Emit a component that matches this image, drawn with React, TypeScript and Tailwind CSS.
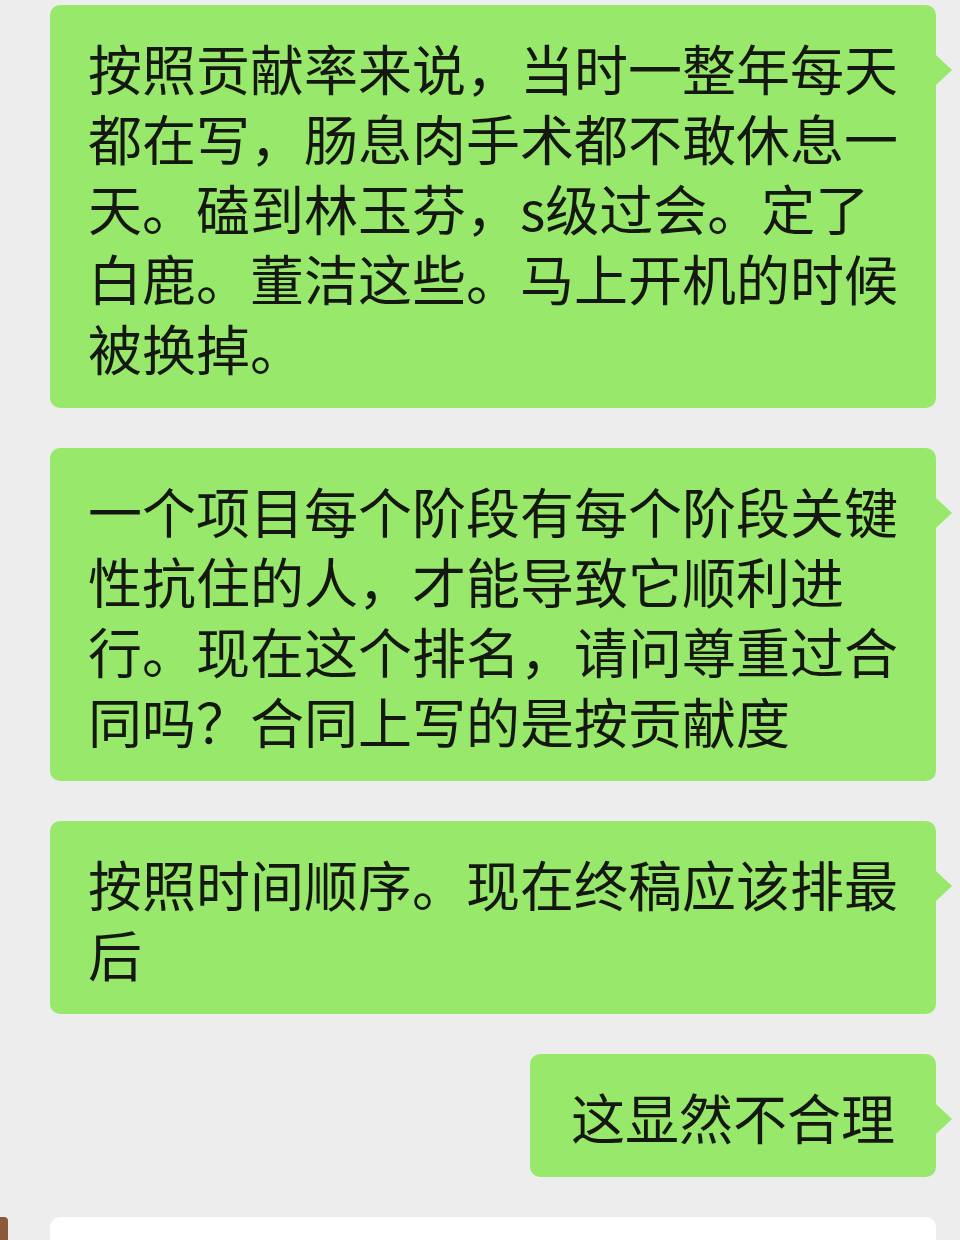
const green = "bg-[#98e96b]";

function Bubble({ lines, wide = true }: { lines: string[]; wide?: boolean }) {
  return (
    <div
      className={`relative rounded-[10px] ${green} pr-[38px] pt-[28px] pb-[25px] ${wide ? "w-[886px] pl-[38px]" : "w-[406px] pl-[41px]"}`}
    >
      {lines.map((l, i) => (
        <div key={i} className="whitespace-nowrap text-[54px] leading-[70px] text-[#141811]">
          {l}
        </div>
      ))}
      {/* tail */}
      <div className="absolute right-[-16px] top-[50px] w-0 h-0 border-y-[15px] border-y-transparent border-l-[16px] border-l-[#98e96b]" />
    </div>
  );
}

export default function App() {
  return (
    <div
      className="h-[1240px] overflow-hidden bg-[#ededed] pt-[5px] pr-[24px] flex flex-col items-end gap-[40px]"
      style={{ fontFamily: '"Noto Sans CJK SC", "Noto Sans", sans-serif' }}
    >
      <Bubble
        lines={[
          "按照贡献率来说，当时一整年每天",
          "都在写，肠息肉手术都不敢休息一",
          "天。磕到林玉芬，s级过会。定了",
          "白鹿。董洁这些。马上开机的时候",
          "被换掉。",
        ]}
      />
      <Bubble
        lines={[
          "一个项目每个阶段有每个阶段关键",
          "性抗住的人，才能导致它顺利进",
          "行。现在这个排名，请问尊重过合",
          "同吗？合同上写的是按贡献度",
        ]}
      />
      <Bubble lines={["按照时间顺序。现在终稿应该排最", "后"]} />
      <Bubble wide={false} lines={["这显然不合理"]} />

      {/* next incoming message, cut off */}
      <div className="self-stretch flex items-start">
        <div className="w-[8px] h-[60px] rounded-r-[4px] bg-[#8a5a3a]" />
        <div className="ml-[42px] w-[888px] h-[80px] rounded-[10px] bg-white" />
      </div>
    </div>
  );
}
